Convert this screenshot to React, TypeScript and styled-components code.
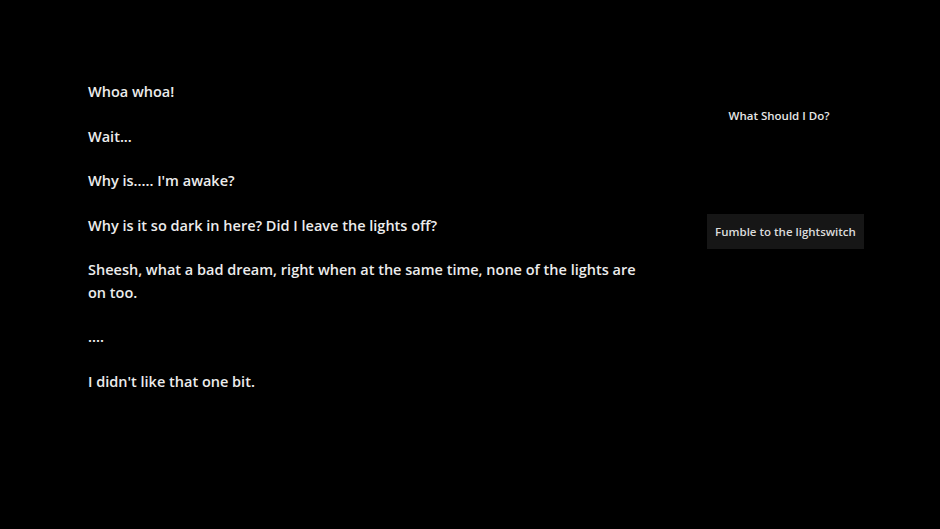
import styled, { createGlobalStyle } from "styled-components";

const GlobalStyle = createGlobalStyle`
  html, body {
    margin: 0;
    padding: 0;
    background: #000;
  }

  body {
    font-family: "Open Sans", "Liberation Sans", sans-serif;
    color: #ececec;
  }
`;

const Screen = styled.div`
  display: flex;
  align-items: flex-start;
  min-height: 529px;
  padding: 81px 0 0 88px;
  box-sizing: border-box;
  gap: 41px;
`;

const Story = styled.div`
  width: 560px;
`;

const Line = styled.p`
  margin: 0 0 22.3px;
  font-size: 14.5px;
  font-weight: 600;
  line-height: 22.3px;
  color: #ececec;
`;

const Choices = styled.div`
  width: 180px;
  display: flex;
  flex-direction: column;
  padding-top: 27px;
`;

const ChoiceTitle = styled.h3`
  margin: 0;
  text-align: center;
  font-size: 11.5px;
  font-weight: 600;
  line-height: 16px;
  color: #e6e6e6;
`;

const ChoiceButton = styled.button`
  align-self: flex-start;
  margin: 90px 0 0 18px;
  width: 157px;
  height: 35px;
  padding: 0;
  border: none;
  background: #161616;
  color: #dcdcdc;
  font-family: inherit;
  font-size: 11.5px;
  font-weight: 600;
  cursor: pointer;
`;

const lines = [
  "Whoa whoa!",
  "Wait...",
  "Why is..... I'm awake?",
  "Why is it so dark in here? Did I leave the lights off?",
  "Sheesh, what a bad dream, right when at the same time, none of the lights are on too.",
  "....",
  "I didn't like that one bit.",
];

export default function App() {
  return (
    <>
      <GlobalStyle />
      <Screen>
        <Story>
          {lines.map((line, i) => (
            <Line key={i}>{line}</Line>
          ))}
        </Story>
        <Choices>
          <ChoiceTitle>What Should I Do?</ChoiceTitle>
          <ChoiceButton>Fumble to the lightswitch</ChoiceButton>
        </Choices>
      </Screen>
    </>
  );
}
